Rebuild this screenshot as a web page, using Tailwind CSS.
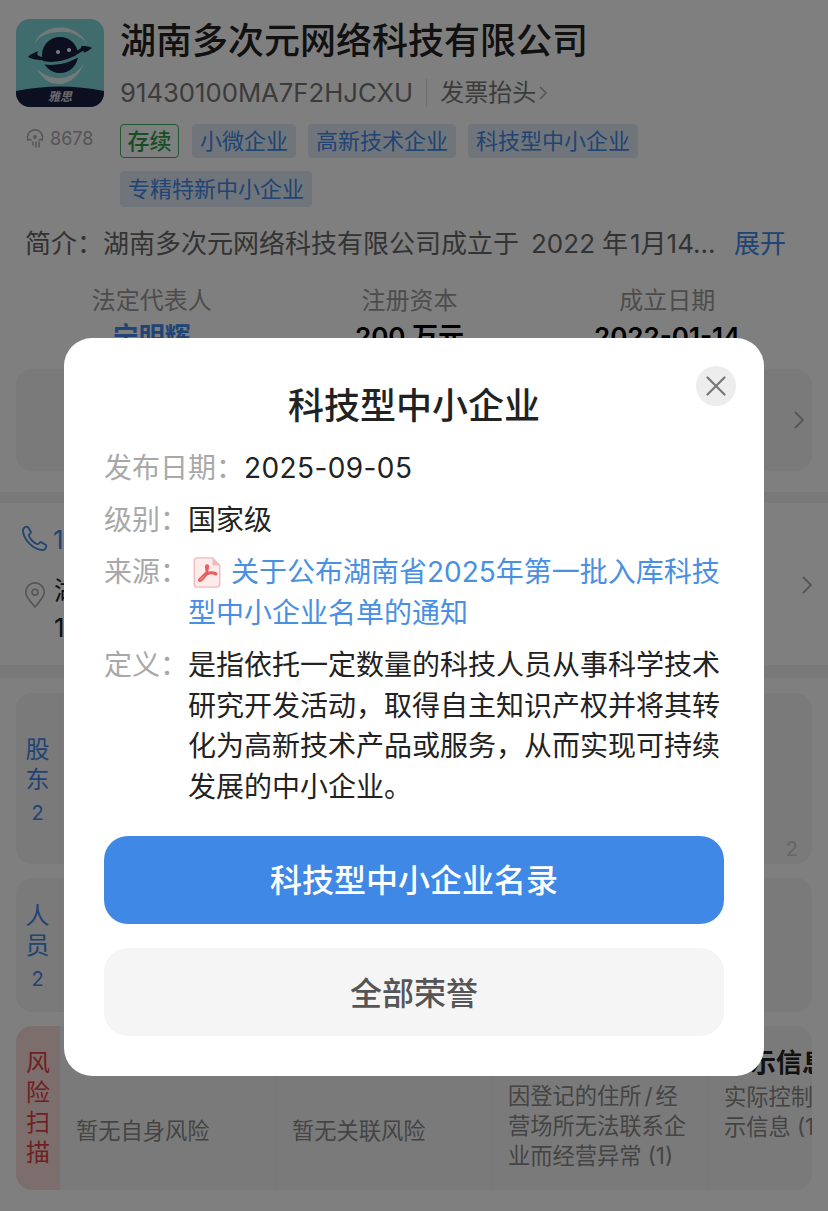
<!DOCTYPE html>
<html lang="zh-CN">
<head>
  <meta charset="UTF-8" />
  <meta name="viewport" content="width=device-width, initial-scale=1.0" />
  <title>湖南多次元网络科技有限公司</title>
  <script src="https://cdn.jsdelivr.net/npm/@tailwindcss/browser@4"></script>
</head>
<body class="bg-white font-['Inter','Noto_Sans_CJK_SC',sans-serif] text-[#222]">
<div class="relative h-[1211px] w-[828px] overflow-hidden">

  <!-- company header -->
  <div class="flex gap-4 pl-4 pt-[19px]">
    <div class="w-[88px] shrink-0">
      <div class="relative h-[88px] w-[88px] overflow-hidden rounded-[14px]">
        <svg viewBox="0 0 88 88" class="h-full w-full">
          <rect width="88" height="88" fill="#80d8dc" />
          <path d="M18 26C22 12 38 7 50 9C60 11 68 18 70 23C62 15 52 12 44 13C30 13 22 18 18 26Z" fill="#e8f4f4" />
          <path d="M14 46C24 50 24 60 36 64C50 68 62 60 68 44C62 54 54 58 44 59C32 60 24 52 14 46Z" fill="#e8f4f4" />
          <circle cx="44" cy="36" r="18" fill="#161e3e" />
          <path d="M12 38C24 45 60 42 76 29C72 27 70 27 65 27C68 30 50 38 32 39C24 38 18 36 23 32C18 34 14 35 12 38Z" fill="#161e3e" />
          <path d="M20 42Q44 50 68 33" fill="none" stroke="#80d8dc" stroke-width="3" />
          <circle cx="42" cy="33" r="2" fill="#fff" />
          <circle cx="53" cy="31" r="2" fill="#fff" />
          <path d="M0 72Q44 63 88 72V88H0Z" fill="#161e3e" />
        </svg>
        <span class="absolute bottom-px left-0 w-full text-center text-[12px] leading-[18px] font-bold italic text-white/80">雅思</span>
      </div>
      <div class="mt-5 flex items-center gap-[5px] pl-[9px] text-[#aaa]">
        <svg viewBox="0 0 20 20" class="h-5 w-5" fill="none" stroke="#aaa" stroke-width="1.5" stroke-linecap="round">
          <path d="M3 11a7.500 7.500 0 1 1 14 0" />
          <path d="M3 11q1.500-1 3 0M14 11q1.500-1 3 0" />
          <circle cx="10" cy="8" r="1.200" />
          <path d="M8 13v3M11 13v5M14 13v5" />
        </svg>
        <span class="text-[18px] leading-6">8678</span>
      </div>
    </div>
    <div class="min-w-0 flex-1">
      <h1 class="text-[36px] leading-[44px] font-medium">湖南多次元网络科技有限公司</h1>
      <div class="mt-[13px] flex h-[34px] items-center text-[#777]">
        <span class="text-[25.700px] leading-[34px]">91430100MA7F2HJCXU</span>
        <span class="mx-[13px] h-7 w-px bg-[#ddd]"></span>
        <span class="text-[24px]">发票抬头</span>
        <svg viewBox="0 0 10 16" class="ml-0.5 h-4 w-2.5" fill="none" stroke="#aaa" stroke-width="1.5"><path d="M2 2l6 6-6 6" /></svg>
      </div>
      <div class="mt-[14px] flex flex-wrap gap-x-3 gap-y-[13px] text-[22px] leading-[34px] text-[#4088e8]">
        <span class="mr-px rounded border border-[#3fae5c] px-[6.500px] font-medium leading-8 text-[#2e9c4c]">存续</span>
        <span class="rounded bg-[#e0ebf6] px-2">小微企业</span>
        <span class="rounded bg-[#e0ebf6] px-2">高新技术企业</span>
        <span class="rounded bg-[#e0ebf6] px-2">科技型中小企业</span>
        <span class="rounded bg-[#e0ebf6] px-2 leading-9">专精特新中小企业</span>
      </div>
    </div>
  </div>

  <!-- intro -->
  <div class="mt-[19px] flex justify-between pl-[25px] pr-[42px] text-[26px] leading-9 text-[#666]">
    <span>简介：湖南多次元网络科技有限公司成立于<span class="mx-[7px] ml-3">2022</span>年<span class="ml-[2px]">1</span>月14...</span>
    <span class="text-[#4088e8]">展开</span>
  </div>

  <!-- key facts -->
  <div class="mt-[23px] grid grid-cols-3 pl-[23px] pr-[32px] text-center">
    <div>
      <p class="text-[24px] leading-8 text-[#999]">法定代表人</p>
      <p class="mt-1 text-[26px] leading-8 font-semibold text-[#4088e8]">宁明辉</p>
    </div>
    <div>
      <p class="text-[24px] leading-8 text-[#999]">注册资本</p>
      <p class="mt-1 text-[26px] leading-8 font-semibold text-black">200 万元</p>
    </div>
    <div>
      <p class="text-[24px] leading-8 text-[#999]">成立日期</p>
      <p class="mt-1 text-[26px] leading-8 font-semibold text-black">2022-01-14</p>
    </div>
  </div>

  <!-- first card -->
  <div class="mx-4 mt-4 flex h-[102px] items-center justify-end rounded-2xl bg-[#f5f5f5] pr-[7px]">
    <svg viewBox="0 0 12 20" class="h-5 w-3" fill="none" stroke="#aaa" stroke-width="1.800"><path d="M2 2l8 8-8 8" /></svg>
  </div>
  <div class="mt-[21px] h-[11px] bg-[#f2f2f2]"></div>

  <!-- contact -->
  <div class="relative h-[162px] pl-[21px] text-[26px] text-[#222]">
    <div class="flex h-[69px] items-center gap-1 pt-[3px]">
      <svg viewBox="0 0 28 28" class="h-7 w-7" fill="none" stroke="#4088e8" stroke-width="1.800" stroke-linejoin="round">
        <path d="M2 5c0-2 3-4 5-3l3 5c0 2-3 2-2 4 1 3 5 7 8 8 2 1 2-2 4-2l5 3c1 2-1 5-3 5C12 25 2 14 2 5z" />
      </svg>
      <span class="text-[#4088e8]">1</span>
    </div>
    <div class="flex gap-[7px]">
      <svg viewBox="0 0 24 28" class="mt-[10px] ml-[2px] h-[26px] w-6" fill="none" stroke="#aaa" stroke-width="1.800">
        <path d="M12 27C5 19 2 15 2 11a10 10 0 0 1 20 0c0 4-3 8-10 16z" />
        <circle cx="12" cy="11" r="3.200" />
      </svg>
      <div class="leading-[37px]">
        <p>湖</p>
        <p>1</p>
      </div>
    </div>
    <svg viewBox="0 0 12 20" class="absolute right-[15px] top-[72px] h-5 w-3" fill="none" stroke="#aaa" stroke-width="1.800"><path d="M2 2l8 8-8 8" /></svg>
  </div>
  <div class="h-[13px] bg-[#f2f2f2]"></div>

  <!-- relation cards -->
  <div class="mx-4 mt-[15px] flex flex-col gap-[14px]">
    <div class="relative flex h-[171px] rounded-2xl bg-[#f5f5f5]">
      <div class="flex w-11 flex-col items-center justify-center border-r border-[#eee] pt-[6px] text-[24px] leading-[30px] text-[#4088e8]">
        <span>股</span><span>东</span><span class="mt-[3px] text-[20px]">2</span>
      </div>
      <span class="absolute bottom-[3px] right-[14px] text-[20px] leading-6 text-[#ccc]">2</span>
    </div>
    <div class="flex h-[134px] rounded-2xl bg-[#f5f5f5]">
      <div class="flex w-11 flex-col items-center justify-center border-r border-[#eee] pt-[5px] text-[24px] leading-[30px] text-[#4088e8]">
        <span>人</span><span>员</span><span class="mt-[3px] text-[20px]">2</span>
      </div>
    </div>
    <div class="flex h-[164px] overflow-hidden rounded-2xl bg-[#f5f5f5] text-[22.250px] leading-[30px] text-[#888]">
      <div class="flex w-11 shrink-0 flex-col items-center justify-center bg-[#fbdcdc] text-[24px] text-[#e04040]">
        <span>风</span><span>险</span><span>扫</span><span>描</span>
      </div>
      <div class="flex w-[216px] shrink-0 items-center border-r border-[#eee] pl-4 pt-[46px]">暂无自身风险</div>
      <div class="flex w-[216px] shrink-0 items-center border-r border-[#eee] pl-4 pt-[46px]">暂无关联风险</div>
      <div class="w-[216px] shrink-0 border-r border-[#eee] pl-4 pt-[55px]">因登记的住所<span class="mx-[3px]">/</span>经<br />营场所无法联系企<br />业而经营异常 (1)</div>
      <div class="w-[216px] shrink-0 pl-4">
        <p class="pt-[17px] text-[26px] leading-[39px] font-semibold text-[#222]">公示信息</p>
        <p>实际控制人未公<br />示信息 (1)</p>
      </div>
    </div>
  </div>

  <!-- dim layer -->
  <div class="absolute inset-0 bg-black/50"></div>

  <!-- dialog -->
  <div class="absolute left-16 top-[338px] h-[738px] w-[700px] rounded-[28px] bg-white px-10 pt-[42px]">
    <button class="absolute right-[28px] top-[28px] flex h-10 w-10 items-center justify-center rounded-full bg-[#ededed]">
      <svg viewBox="0 0 20 20" class="h-5 w-5" fill="none" stroke="#777" stroke-width="2.200" stroke-linecap="round"><path d="M1.500 1.500l17 17M18.500 1.500l-17 17" /></svg>
    </button>
    <h2 class="text-center text-[36px] leading-[52px] font-medium">科技型中小企业</h2>

    <div class="mt-4 flex flex-col gap-[11px] text-[28px] leading-[41px]">
      <div class="flex">
        <span class="shrink-0 text-[#a8a8a8]">发布日期：</span>
        <span class="tracking-[0.400px] text-[#222]">2025-09-05</span>
      </div>
      <div class="flex">
        <span class="shrink-0 text-[#a8a8a8]">级别：</span>
        <span>国家级</span>
      </div>
      <div class="flex">
        <span class="shrink-0 text-[#a8a8a8]">来源：</span>
        <a class="w-[536px] text-[#4a90e2]">
          <svg viewBox="0 0 30 34" class="mr-[10px] mb-[4px] ml-[5px] inline-block h-[31px] w-[28px] align-middle" stroke-linejoin="round">
            <path d="M4 1h17l8 8v21a3 3 0 0 1-3 3H4a3 3 0 0 1-3-3V4a3 3 0 0 1 3-3z" fill="#fdeaea" stroke="#f3b9b9" stroke-width="1.500" />
            <path d="M21 1v8h8z" fill="#f3b9b9" />
            <path d="M15 9c-1.500 0-1.500 4 0 7l-8 8c-2 2 0 3 2 1.500 2-1.500 4-5 6-6.500 3-1 7-1.500 9 0 1.500 1 2-1 .5-1.500-3-1-6-1-9.500 0-.5-.5 3-8.500 0-8.500z" fill="none" stroke="#e4605c" stroke-width="2.200" />
          </svg>关于公布湖南省2025年第一批入库科技<br />型中小企业名单的通知
        </a>
      </div>
      <div class="flex">
        <span class="shrink-0 text-[#a8a8a8]">定义：</span>
        <p class="w-[536px] leading-[40.500px] text-[#222]">是指依托一定数量的科技人员从事科学技术研究开发活动，取得自主知识产权并将其转化为高新技术产品或服务，从而实现可持续发展的中小企业。</p>
      </div>
    </div>

    <div class="absolute inset-x-10 bottom-10 flex flex-col gap-6 text-[32px]">
      <button class="h-[88px] rounded-3xl bg-[#3f88e6] pt-[2px] font-medium text-white">科技型中小企业名录</button>
      <button class="h-[88px] rounded-3xl bg-[#f5f5f5] pt-[3px] font-medium text-[#555]">全部荣誉</button>
    </div>
  </div>
</div>
</body>
</html>
